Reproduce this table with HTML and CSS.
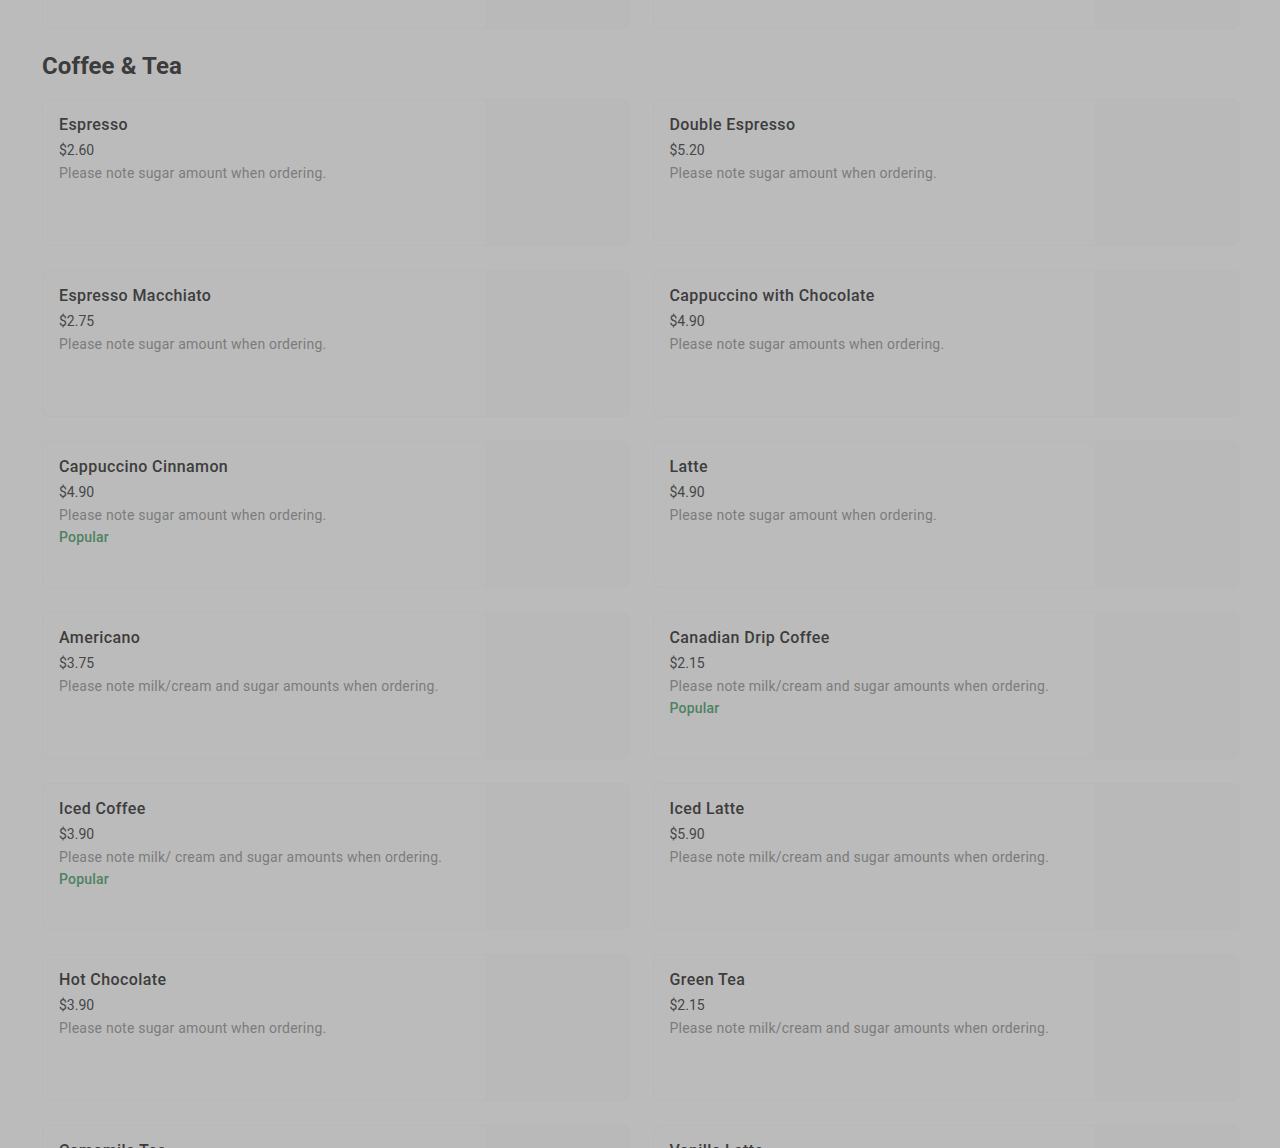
FILE: index.html
```html
<!DOCTYPE html>
<html lang="en">
  <head>
    <meta name="viewport" content="width=device-width, initial-scale=1">
    <link rel="stylesheet" href="styles.css">
  </head>
  <body>
    <div id="menuContainer">
      <div class="grid prev">
        <div class="card"><div class="info"></div><div class="thumb"></div></div>
        <div class="card"><div class="info"></div><div class="thumb"></div></div>
      </div>

      <h2 class="section">Coffee &amp; Tea</h2>
      <div class="grid">
        <div class="card">
          <div class="info">
            <div class="title">Espresso</div>
            <div class="price">$2.60</div>
            <div class="desc">Please note sugar amount when ordering.</div>
          </div>
          <div class="thumb"></div>
        </div>
        <div class="card">
          <div class="info">
            <div class="title">Double Espresso</div>
            <div class="price">$5.20</div>
            <div class="desc">Please note sugar amount when ordering.</div>
          </div>
          <div class="thumb"></div>
        </div>
        <div class="card">
          <div class="info">
            <div class="title">Espresso Macchiato</div>
            <div class="price">$2.75</div>
            <div class="desc">Please note sugar amount when ordering.</div>
          </div>
          <div class="thumb"></div>
        </div>
        <div class="card">
          <div class="info">
            <div class="title">Cappuccino with Chocolate</div>
            <div class="price">$4.90</div>
            <div class="desc">Please note sugar amounts when ordering.</div>
          </div>
          <div class="thumb"></div>
        </div>
        <div class="card">
          <div class="info">
            <div class="title">Cappuccino Cinnamon</div>
            <div class="price">$4.90</div>
            <div class="desc">Please note sugar amount when ordering.</div>
            <div class="popular">Popular</div>
          </div>
          <div class="thumb"></div>
        </div>
        <div class="card">
          <div class="info">
            <div class="title">Latte</div>
            <div class="price">$4.90</div>
            <div class="desc">Please note sugar amount when ordering.</div>
          </div>
          <div class="thumb"></div>
        </div>
        <div class="card">
          <div class="info">
            <div class="title">Americano</div>
            <div class="price">$3.75</div>
            <div class="desc">Please note milk/cream and sugar amounts when ordering.</div>
          </div>
          <div class="thumb"></div>
        </div>
        <div class="card">
          <div class="info">
            <div class="title">Canadian Drip Coffee</div>
            <div class="price">$2.15</div>
            <div class="desc">Please note milk/cream and sugar amounts when ordering.</div>
            <div class="popular">Popular</div>
          </div>
          <div class="thumb"></div>
        </div>
        <div class="card">
          <div class="info">
            <div class="title">Iced Coffee</div>
            <div class="price">$3.90</div>
            <div class="desc">Please note milk/ cream and sugar amounts when ordering.</div>
            <div class="popular">Popular</div>
          </div>
          <div class="thumb"></div>
        </div>
        <div class="card">
          <div class="info">
            <div class="title">Iced Latte</div>
            <div class="price">$5.90</div>
            <div class="desc">Please note milk/cream and sugar amounts when ordering.</div>
          </div>
          <div class="thumb"></div>
        </div>
        <div class="card">
          <div class="info">
            <div class="title">Hot Chocolate</div>
            <div class="price">$3.90</div>
            <div class="desc">Please note sugar amount when ordering.</div>
          </div>
          <div class="thumb"></div>
        </div>
        <div class="card">
          <div class="info">
            <div class="title">Green Tea</div>
            <div class="price">$2.15</div>
            <div class="desc">Please note milk/cream and sugar amounts when ordering.</div>
          </div>
          <div class="thumb"></div>
        </div>
        <div class="card">
          <div class="info">
            <div class="title">Camomile Tea</div>
            <div class="price">$2.15</div>
            <div class="desc">Please note sugar amount when ordering.</div>
          </div>
          <div class="thumb"></div>
        </div>
        <div class="card">
          <div class="info">
            <div class="title">Vanilla Latte</div>
            <div class="price">$5.40</div>
            <div class="desc">Please note sugar amount when ordering.</div>
          </div>
          <div class="thumb"></div>
        </div>
      </div>
    </div>
  </body>
</html>
```

FILE: styles.css
```css
body {
  margin: 0;
  background: #bbbbbb;
  font-family: Roboto, "Liberation Sans", sans-serif;
  overflow: hidden;
}
#menuContainer {
  padding: 0 40px 0 42px;
}
.grid {
  display: grid;
  grid-template-columns: 1fr 1fr;
  column-gap: 23px;
  row-gap: 24px;
}
.grid.prev {
  margin-top: -118px;
}
.section {
  margin: 0;
  padding: 21px 0 17px;
  font-size: 24px;
  line-height: 32px;
  font-weight: 700;
  letter-spacing: 0.1px;
  color: #3c3c3c;
}
.card {
  height: 145px;
  display: flex;
  border: 1px solid #b8b8b8;
  border-radius: 8px;
  overflow: hidden;
}
.info {
  flex: 1;
  padding: 13px 16px 0;
}
.thumb {
  width: 144px;
  background: #b9b9b9;
}
.title {
  font-size: 16px;
  line-height: 24px;
  font-weight: 500;
  letter-spacing: 0.4px;
  color: #3d3d3d;
}
.price {
  margin-top: 3px;
  font-size: 14px;
  line-height: 20px;
  color: #474747;
}
.desc {
  margin-top: 3px;
  font-size: 14px;
  line-height: 20px;
  letter-spacing: 0.22px;
  color: #7c7c7c;
}
.popular {
  margin-top: 2px;
  font-size: 14px;
  line-height: 20px;
  font-weight: 500;
  letter-spacing: 0.2px;
  color: #4e8262;
}
```
